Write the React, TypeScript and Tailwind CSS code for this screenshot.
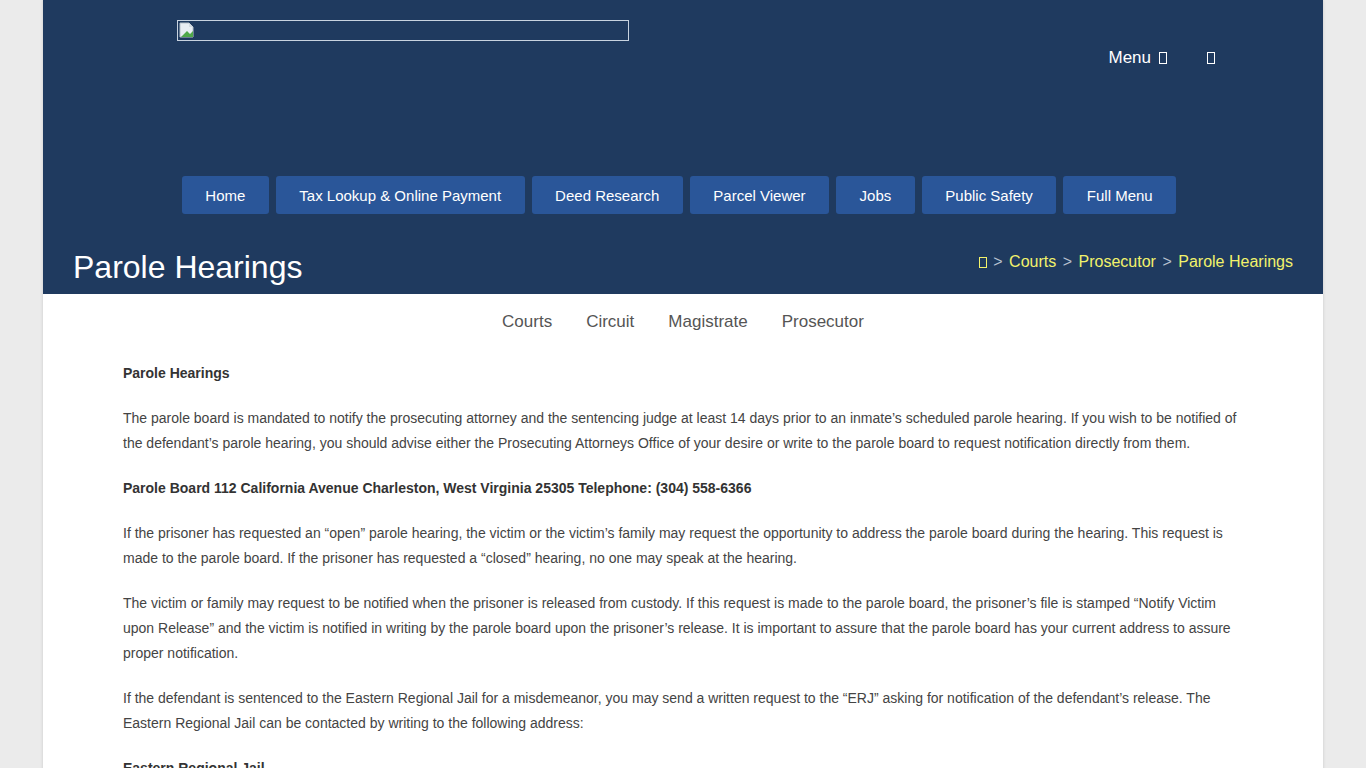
export default function App() {
    const nav = ["Home", "Tax Lookup & Online Payment", "Deed Research", "Parcel Viewer", "Jobs", "Public Safety", "Full Menu"]
    const subnav = ["Courts", "Circuit", "Magistrate", "Prosecutor"]

    return (
        <div className="min-h-screen bg-[#ebebeb] font-['Liberation_Sans',Arial,sans-serif]">
            <div className="mx-auto w-[1280px] bg-white shadow-[0_0_3px_rgba(0,0,0,0.15)]">
                {/* Header */}
                <header className="bg-[#1f3a5f]">
                    <div className="flex h-[176px] items-start justify-between pl-[134px] pr-[108px]">
                        <div className="mt-[20px] flex h-[21px] w-[452px] items-start border border-[#c8d3e0] p-[1px]">
                            <svg width="16" height="16" viewBox="0 0 16 16">
                                <path d="M1 1h9l4 4v10H1z" fill="#e8eef3" stroke="#b7c2cc" strokeWidth="1" />
                                <path d="M10 1v4h4" fill="#d3dbe2" />
                                <path d="M2 15l6-6 3 3 3-3v6z" fill="#4fa84a" />
                            </svg>
                        </div>
                        <div className="mt-[45px] flex items-center text-[17px] text-white">
                            <span>Menu</span>
                            <span className="ml-[8px] inline-block h-[12px] w-[8px] border border-white" />
                            <span className="ml-[40px] inline-block h-[12px] w-[8px] border border-white" />
                        </div>
                    </div>

                    <nav className="flex justify-center gap-[7px] pr-[8px]">
                        {nav.map((item) => (
                            <a
                                key={item}
                                className="flex h-[38px] items-center rounded-[3px] bg-[#2a5699] px-[23.5px] pt-[2px] text-[15px] text-white"
                            >
                                {item}
                            </a>
                        ))}
                    </nav>

                    <div className="flex h-[80px] items-end justify-between px-[30px]">
                        <h1 className="pb-[8px] text-[32px] leading-[1.2] text-white">Parole Hearings</h1>
                        <div className="flex items-center gap-[6.5px] pb-[20px] text-[16px] leading-[24px]">
                            <span className="inline-block h-[11px] w-[8px] border border-[#f2f26b]" />
                            <span className="text-[#b8c2d0]">&gt;</span>
                            <a className="text-[#f2f26b]">Courts</a>
                            <span className="text-[#b8c2d0]">&gt;</span>
                            <a className="text-[#f2f26b]">Prosecutor</a>
                            <span className="text-[#b8c2d0]">&gt;</span>
                            <span className="text-[#f2f26b]">Parole Hearings</span>
                        </div>
                    </div>
                </header>

                {/* Sub navigation */}
                <div className="flex justify-center pt-[16px] text-[17px] leading-[24px] text-[#555]">
                    {subnav.map((item) => (
                        <a key={item} className="px-[17px]">
                            {item}
                        </a>
                    ))}
                </div>

                {/* Content */}
                <main className="px-[80px] pt-[27px] pb-[40px] text-[14px] leading-[25px] text-[#444]">
                    <p className="mb-[20px] font-bold text-[#333]">Parole Hearings</p>
                    <p className="mb-[20px]">
                        The parole board is mandated to notify the prosecuting attorney and the sentencing judge at least 14 days prior to an inmate’s scheduled parole hearing. If you wish to be notified of the defendant’s parole hearing, you should advise either the Prosecuting Attorneys Office of your desire or write to the parole board to request notification directly from them.
                    </p>
                    <p className="mb-[20px] font-bold text-[#333]">
                        Parole Board 112 California Avenue Charleston, West Virginia 25305 Telephone: (304) 558-6366
                    </p>
                    <p className="mb-[20px]">
                        If the prisoner has requested an “open” parole hearing, the victim or the victim’s family may request the opportunity to address the parole board during the hearing. This request is made to the parole board. If the prisoner has requested a “closed” hearing, no one may speak at the hearing.
                    </p>
                    <p className="mb-[20px]">
                        The victim or family may request to be notified when the prisoner is released from custody. If this request is made to the parole board, the prisoner’s file is stamped “Notify Victim upon Release” and the victim is notified in writing by the parole board upon the prisoner’s release. It is important to assure that the parole board has your current address to assure proper notification.
                    </p>
                    <p className="mb-[20px]">
                        If the defendant is sentenced to the Eastern Regional Jail for a misdemeanor, you may send a written request to the “ERJ” asking for notification of the defendant’s release. The Eastern Regional Jail can be contacted by writing to the following address:
                    </p>
                    <p className="mb-[20px] font-bold text-[#333]">Eastern Regional Jail</p>
                </main>
            </div>
        </div>
    )
}
